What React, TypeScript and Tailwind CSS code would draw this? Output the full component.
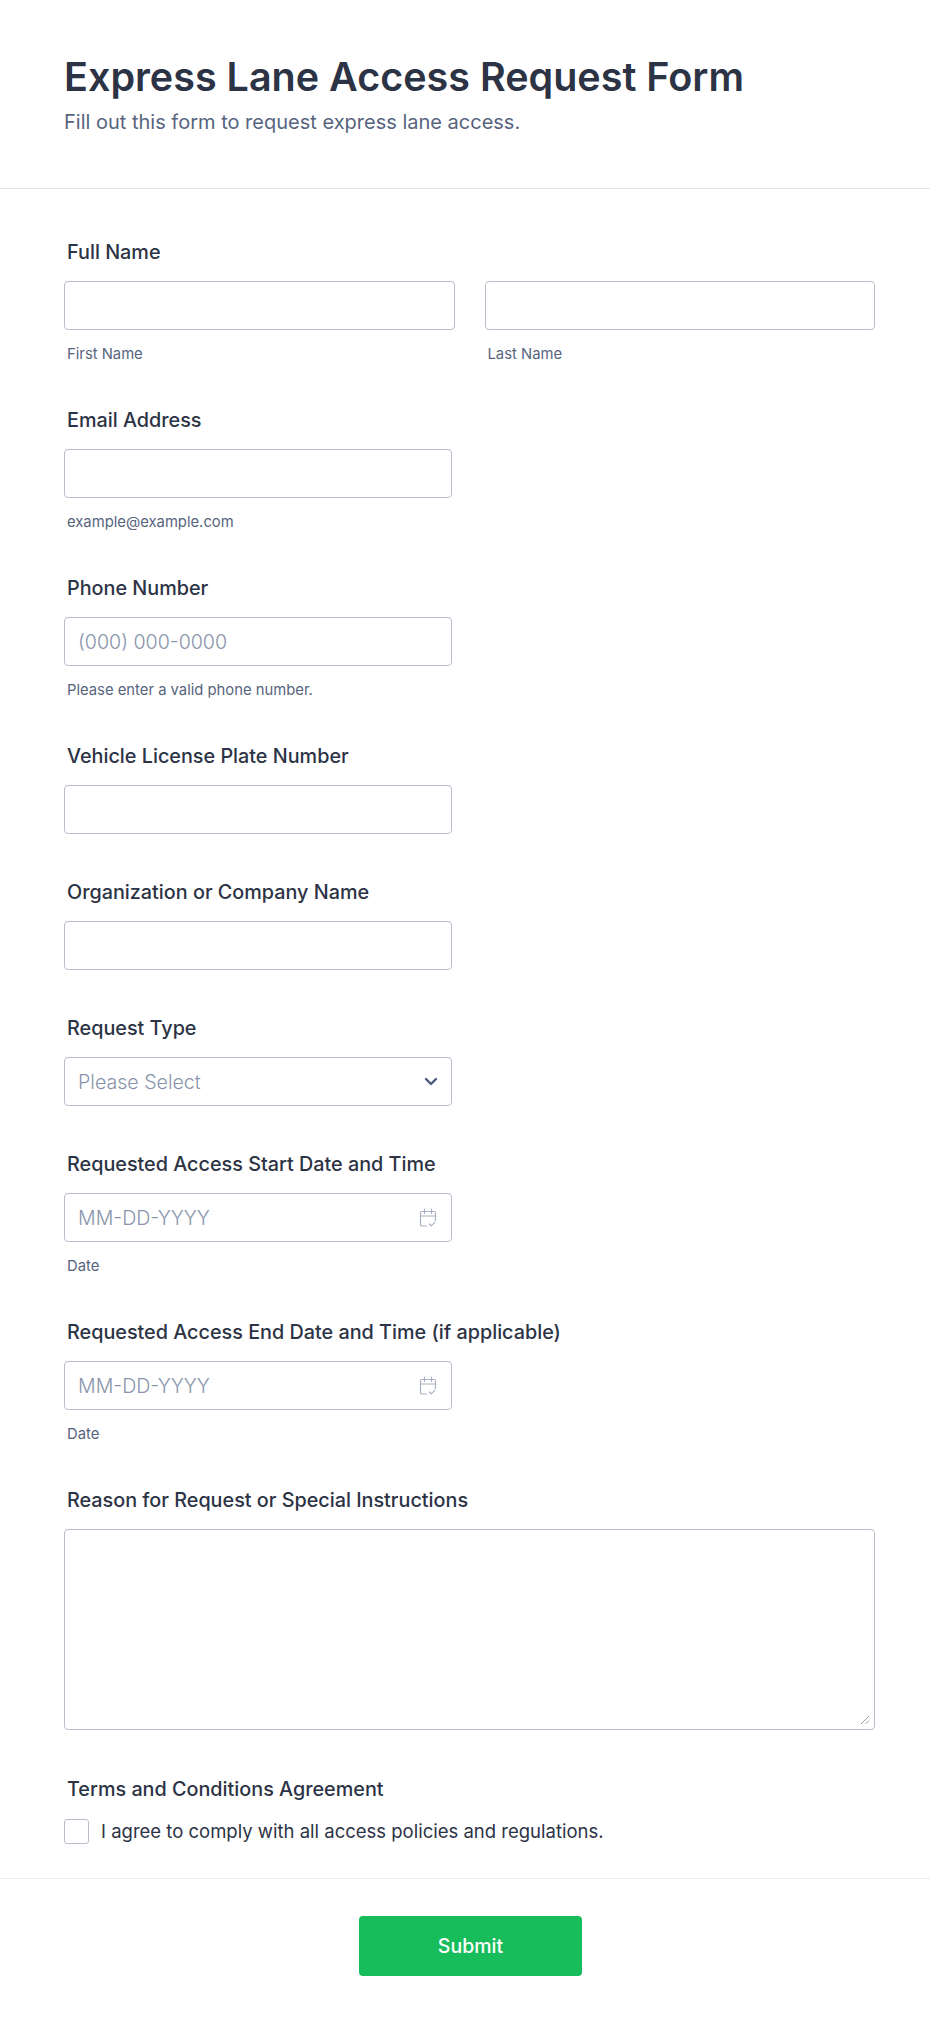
import React from "react";

function Label({ children }: { children: React.ReactNode }) {
  return <div className="ml-[3px] pt-[1px] mb-[15px] text-[19.8px] leading-[28px] font-medium text-[#2c3345]">{children}</div>;
}

function Sub({ children }: { children: React.ReactNode }) {
  return <div className="ml-[3px] mt-[15px] text-[14.8px] leading-[18px] text-[#57647e]">{children}</div>;
}

const inputBox = "h-[49px] rounded-[4px] border border-[#b8bdc9] bg-white flex items-center justify-between px-[13px] text-[19.6px] font-light text-[#8894ab]";

function CalendarIcon() {
  return (
    <svg className="mr-[1px]" width="18" height="19" viewBox="0 0 18 19" fill="none" stroke="#a8b0c2" strokeWidth="1.2" strokeLinecap="round" strokeLinejoin="round">
      <path d="M7.5 18H3a1.5 1.5 0 0 1-1.5-1.5V5A1.5 1.5 0 0 1 3 3.5h12A1.5 1.5 0 0 1 16.5 5v7.5" />
      <path d="M1.5 8h15" />
      <path d="M5.5 1v4.5M12.5 1v4.5" />
      <path d="M10.5 16l1.8 1.8 3.7-3.7" />
    </svg>
  );
}

function ChevronIcon() {
  return (
    <svg width="14" height="9" viewBox="0 0 14 9" fill="none" stroke="#4b5a7a" strokeWidth="2.4" strokeLinecap="round" strokeLinejoin="round">
      <path d="M2 2l5 5 5-5" />
    </svg>
  );
}

function DateField({ label, className }: { label: string; className: string }) {
  return (
    <section className={className}>
      <Label>{label}</Label>
      <div className={`${inputBox} w-[388px]`}>
        <span className="pt-[2px]">MM-DD-YYYY</span>
        <CalendarIcon />
      </div>
      <Sub>Date</Sub>
    </section>
  );
}

export default function App() {
  return (
    <div className="w-[930px] h-[2026px] bg-white font-['Inter',sans-serif] text-[#2c3345]">
      <header className="h-[189px] border-b border-[#dfe2ea] px-[64px] pt-[53px]">
        <h1 className="text-[39.5px] leading-[48px] font-semibold text-[#2c3345]">Express Lane Access Request Form</h1>
        <p className="mt-[8px] text-[20px] leading-[26px] text-[#57647e]">Fill out this form to request express lane access.</p>
      </header>

      <main className="px-[64px] pt-[48px]">
        <section>
          <Label>Full Name</Label>
          <div className="grid grid-cols-2 gap-[30px] w-[811px]">
            <div>
              <div className={inputBox} />
              <Sub>First Name</Sub>
            </div>
            <div>
              <div className={inputBox} />
              <Sub>Last Name</Sub>
            </div>
          </div>
        </section>

        <section className="mt-[42px]">
          <Label>Email Address</Label>
          <div className={`${inputBox} w-[388px]`} />
          <Sub>example@example.com</Sub>
        </section>

        <section className="mt-[42px]">
          <Label>Phone Number</Label>
          <div className={`${inputBox} w-[388px]`}>
            <span className="pt-[2px]">(000) 000-0000</span>
          </div>
          <Sub>Please enter a valid phone number.</Sub>
        </section>

        <section className="mt-[42px]">
          <Label>Vehicle License Plate Number</Label>
          <div className={`${inputBox} w-[388px]`} />
        </section>

        <section className="mt-[43px]">
          <Label>Organization or Company Name</Label>
          <div className={`${inputBox} w-[388px]`} />
        </section>

        <section className="mt-[43px]">
          <Label>Request Type</Label>
          <div className={`${inputBox} w-[388px]`}>
            <span className="pt-[2px]">Please Select</span>
            <ChevronIcon />
          </div>
        </section>

        <DateField className="mt-[43px]" label="Requested Access Start Date and Time" />
        <DateField className="mt-[42px]" label="Requested Access End Date and Time (if applicable)" />

        <section className="mt-[42px]">
          <Label>Reason for Request or Special Instructions</Label>
          <div className="relative h-[201px] w-[811px] rounded-[4px] border border-[#b8bdc9] bg-white">
            <svg className="absolute right-[4px] bottom-[4px]" width="10" height="10" viewBox="0 0 10 10" stroke="#9a9fa8" strokeWidth="1">
              <path d="M1 9l8-8M5.5 9l3.5-3.5" />
            </svg>
          </div>
        </section>

        <section className="mt-[44px]">
          <Label>Terms and Conditions Agreement</Label>
          <div className="flex items-center gap-[12px]">
            <div className="w-[25px] h-[25px] rounded-[3px] border border-[#b8bdc9] bg-white" />
            <span className="text-[18.5px] leading-[26px] text-[#2c3345]">I agree to comply with all access policies and regulations.</span>
          </div>
        </section>
      </main>

      <footer className="mt-[34px] border-t border-[#eaebf2] pt-[37px] pl-[11px] flex justify-center">
        <button className="w-[223px] h-[60px] rounded-[4px] bg-[#18bd5b] text-white text-[19.5px] font-medium pt-[2px]">Submit</button>
      </footer>
    </div>
  );
}
